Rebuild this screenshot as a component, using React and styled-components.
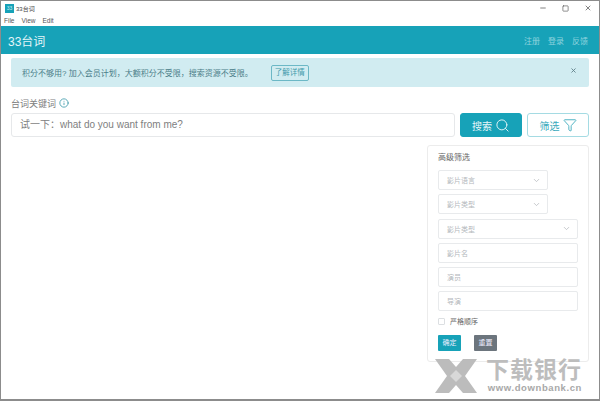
import React from "react";
import styled, { createGlobalStyle } from "styled-components";
import { Search, Filter, ChevronDown, Info, X, Minus, Square } from "lucide-react";

const Global = createGlobalStyle`
    html, body { margin:0; padding:0; background:#fff; }
    body { font-family:"Liberation Sans","Noto Sans CJK SC",sans-serif; }
`
const Win = styled.div`
    position:relative;
    box-sizing:border-box;
    width:600px;
    height:401px;
    overflow:hidden;
    background:#fff;
    border:1px solid #8c8c8c;
    border-bottom-width:2px;
    display:flex;
    flex-direction:column;
`
const TitleBar = styled.div`
    display:flex;
    align-items:center;
    height:14px;
    padding:0 0 1px 4px;
    font-size:6px;
    color:#444;
`
const AppIcon = styled.div`
    width:9px;
    height:9px;
    margin-right:2px;
    background:#17a2b8;
    color:#cdeef3;
    font-size:5px;
    line-height:9px;
    text-align:center;
`
const WinButtons = styled.div`
    margin-left:auto;
    display:flex;
    align-items:center;
    gap:15px;
    padding-right:7px;
    color:#444;
`
const MenuBar = styled.div`
    display:flex;
    gap:7px;
    height:10px;
    padding-left:3px;
    font-size:6.5px;
    line-height:10px;
    color:#555;
`
const Header = styled.div`
    display:flex;
    align-items:center;
    justify-content:space-between;
    height:28px;
    padding:0 11px 0 7px;
    background:#17a2b8;
    color:#e4f5f8;
    font-size:12px;
`
const HeaderLinks = styled.div`
    display:flex;
    gap:8px;
    font-size:8px;
    color:#8fd3de;
`
const Content = styled.div`
    padding:4px 10px 0;
`
const Alert = styled.div`
    display:flex;
    align-items:center;
    height:29px;
    padding-left:11px;
    padding-right:12px;
    background:#d1ecf1;
    border-radius:2px;
    color:#4a7d88;
    font-size:8px;
`
const DetailBtn = styled.div`
    margin-left:18px;
    width:38px;
    height:16px;
    line-height:14px;
    text-align:center;
    box-sizing:border-box;
    border:1px solid #6cb8c6;
    border-radius:2px;
    color:#3f9aab;
    font-size:7.5px;
`
const AlertClose = styled.div`
    margin-left:auto;
    margin-top:-5px;
    display:flex;
    color:#5f7f87;
`
const Label = styled.div`
    display:flex;
    align-items:center;
    gap:3px;
    margin-top:8px;
    height:16px;
    font-size:9px;
    color:#808080;
`
const SearchRow = styled.div`
    display:flex;
    margin-top:2px;
    height:24px;
`
const KeywordInput = styled.div`
    flex:1;
    box-sizing:border-box;
    border:1px solid #e6e8ea;
    border-radius:3px;
    padding-left:8px;
    margin-right:5px;
    font-size:10px;
    line-height:22px;
    color:#808080;
`
const ActionBtn = styled.div`
    box-sizing:border-box;
    width:62px;
    margin-left:${p=>p.$outline?"5px":"0"};
    display:flex;
    align-items:center;
    justify-content:center;
    gap:3px;
    border-radius:3px;
    font-size:10px;
    border:1px solid ${p=>p.$outline?"#a5dbe3":"#17a2b8"};
    background:${p=>p.$outline?"#fff":"#17a2b8"};
    color:${p=>p.$outline?"#39a9bc":"#e6f6f8"};
`
const PanelRow = styled.div`
    display:flex;
    justify-content:flex-end;
    margin-top:8px;
`
const Panel = styled.div`
    box-sizing:border-box;
    width:162px;
    height:217px;
    padding:7px 10px 0;
    border:1px solid #ececec;
    border-radius:3px;
`
const PanelTitle = styled.div`
    font-size:8px;
    line-height:10px;
    color:#666;
    margin-bottom:7px;
`
const Field = styled.div`
    box-sizing:border-box;
    display:flex;
    align-items:center;
    justify-content:space-between;
    width:${p=>p.$short?"110px":"140px"};
    height:20px;
    margin-bottom:4.3px;
    padding:0 6px 0 8px;
    border:1px solid #e8eaec;
    border-radius:2px;
    font-size:7px;
    color:#b4b8bc;
`
const CheckRow = styled.div`
    display:flex;
    align-items:center;
    gap:5px;
    margin-top:5px;
    font-size:7px;
    color:#666;
`
const Check = styled.div`
    box-sizing:border-box;
    width:7px;
    height:7px;
    border:1px solid #dcdfe2;
    border-radius:1px;
`
const PanelButtons = styled.div`
    display:flex;
    gap:13px;
    margin-top:9px;
`
const SmallBtn = styled.div`
    width:23px;
    height:16px;
    line-height:16px;
    text-align:center;
    border-radius:1px;
    font-size:7px;
    color:#eef;
    background:${p=>p.$grey?"#6c757d":"#17a2b8"};
`
const Watermark = styled.div`
    position:absolute;
    left:434px;
    top:358px;
    display:flex;
    align-items:flex-start;
    gap:9px;
    color:#b3b3b3;
`
const MarkText = styled.div`
    display:flex;
    flex-direction:column;
    align-items:flex-end;
`
const MarkTitle = styled.div`
    font-size:23px;
    line-height:23px;
    font-weight:700;
    letter-spacing:1px;
    color:#bdbdbd;
`
const MarkUrl = styled.div`
    margin-top:1px;
    font-size:9.5px;
    line-height:10px;
    font-weight:700;
    letter-spacing:.6px;
    color:#a8a8a8;
`

const App = () => (
    <Win>
        <Global />
        <TitleBar>
            <AppIcon>33</AppIcon>33台词
            <WinButtons>
                <Minus size={8} />
                <Square size={7} />
                <X size={8} />
            </WinButtons>
        </TitleBar>
        <MenuBar><span>File</span><span>View</span><span>Edit</span></MenuBar>
        <Header>
            <span>33台词</span>
            <HeaderLinks><span>注册</span><span>登录</span><span>反馈</span></HeaderLinks>
        </Header>
        <Content>
            <Alert>
                积分不够用? 加入会员计划，大额积分不受限，搜索资源不受限。
                <DetailBtn>了解详情</DetailBtn>
                <AlertClose><X size={7} strokeWidth={3} /></AlertClose>
            </Alert>
            <Label>台词关键词 <Info size={10} color="#3f9aab" /></Label>
            <SearchRow>
                <KeywordInput>试一下：what do you want from me?</KeywordInput>
                <ActionBtn>搜索<Search size={15} strokeWidth={1.5} /></ActionBtn>
                <ActionBtn $outline>筛选<Filter size={14} strokeWidth={1.5} /></ActionBtn>
            </SearchRow>
            <PanelRow>
                <Panel>
                    <PanelTitle>高级筛选</PanelTitle>
                    <Field $short>影片语言<ChevronDown size={9} /></Field>
                    <Field $short>影片类型<ChevronDown size={9} /></Field>
                    <Field>影片类型<ChevronDown size={9} /></Field>
                    <Field>影片名</Field>
                    <Field>演员</Field>
                    <Field>导演</Field>
                    <CheckRow><Check />严格顺序</CheckRow>
                    <PanelButtons>
                        <SmallBtn>确定</SmallBtn>
                        <SmallBtn $grey>重置</SmallBtn>
                    </PanelButtons>
                </Panel>
            </PanelRow>
        </Content>
        <Watermark>
            <svg width="42" height="34" viewBox="0 0 42 34">
                <path d="M0 0H14L21 8 28 0H42L30 17 42 34H28L21 26 14 34H0L12 17Z" fill="#bcbcbc" />
                <path d="M21 11l6 6-6 6-6-6z" fill="#d8d8d8" />
            </svg>
            <MarkText>
                <MarkTitle>下载银行</MarkTitle>
                <MarkUrl>www.downbank.cn</MarkUrl>
            </MarkText>
        </Watermark>
    </Win>
)
export default App;
